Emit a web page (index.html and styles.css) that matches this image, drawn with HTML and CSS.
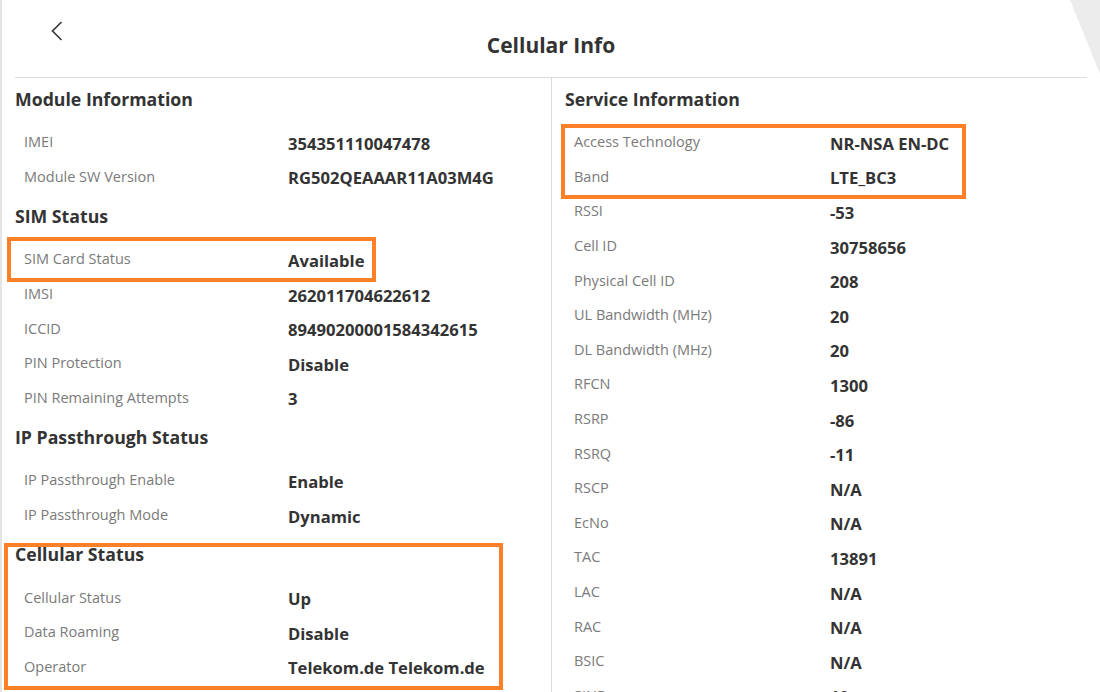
FILE: index.html
```html
<!DOCTYPE html>
<html lang="en">
<head>
<meta charset="utf-8">
<title>Cellular Info</title>
<link rel="stylesheet" href="styles.css">
</head>
<body>
<div class="page">
  <div class="corner"></div>
  <header class="header">
    <div class="back">
      <svg width="12" height="20" viewBox="0 0 12 20"><polyline points="10.5,1 1.5,10 10.5,19" fill="none" stroke="#333" stroke-width="1.6"/></svg>
    </div>
    <h1 class="title">Cellular Info</h1>
    <div></div>
  </header>

  <main class="content">
    <section class="col col-left">
      <h2 class="sec">Module Information</h2>
      <div class="row"><span class="lbl">IMEI</span><span class="val">354351110047478</span></div>
      <div class="row"><span class="lbl">Module SW Version</span><span class="val">RG502QEAAAR11A03M4G</span></div>

      <h2 class="sec">SIM Status</h2>
      <div class="row"><span class="lbl">SIM Card Status</span><span class="val">Available</span></div>
      <div class="row"><span class="lbl">IMSI</span><span class="val">262011704622612</span></div>
      <div class="row"><span class="lbl">ICCID</span><span class="val">89490200001584342615</span></div>
      <div class="row"><span class="lbl">PIN Protection</span><span class="val">Disable</span></div>
      <div class="row"><span class="lbl">PIN Remaining Attempts</span><span class="val">3</span></div>

      <h2 class="sec">IP Passthrough Status</h2>
      <div class="row"><span class="lbl">IP Passthrough Enable</span><span class="val">Enable</span></div>
      <div class="row"><span class="lbl">IP Passthrough Mode</span><span class="val">Dynamic</span></div>

      <h2 class="sec">Cellular Status</h2>
      <div class="row"><span class="lbl">Cellular Status</span><span class="val">Up</span></div>
      <div class="row"><span class="lbl">Data Roaming</span><span class="val">Disable</span></div>
      <div class="row"><span class="lbl">Operator</span><span class="val">Telekom.de Telekom.de</span></div>

      <div class="mark mark-sim"></div>
      <div class="mark mark-cell"></div>
    </section>

    <section class="col col-right">
      <h2 class="sec">Service Information</h2>
      <div class="row"><span class="lbl">Access Technology</span><span class="val">NR-NSA EN-DC</span></div>
      <div class="row"><span class="lbl">Band</span><span class="val">LTE_BC3</span></div>
      <div class="row"><span class="lbl">RSSI</span><span class="val">-53</span></div>
      <div class="row"><span class="lbl">Cell ID</span><span class="val">30758656</span></div>
      <div class="row"><span class="lbl">Physical Cell ID</span><span class="val">208</span></div>
      <div class="row"><span class="lbl">UL Bandwidth (MHz)</span><span class="val">20</span></div>
      <div class="row"><span class="lbl">DL Bandwidth (MHz)</span><span class="val">20</span></div>
      <div class="row"><span class="lbl">RFCN</span><span class="val">1300</span></div>
      <div class="row"><span class="lbl">RSRP</span><span class="val">-86</span></div>
      <div class="row"><span class="lbl">RSRQ</span><span class="val">-11</span></div>
      <div class="row"><span class="lbl">RSCP</span><span class="val">N/A</span></div>
      <div class="row"><span class="lbl">EcNo</span><span class="val">N/A</span></div>
      <div class="row"><span class="lbl">TAC</span><span class="val">13891</span></div>
      <div class="row"><span class="lbl">LAC</span><span class="val">N/A</span></div>
      <div class="row"><span class="lbl">RAC</span><span class="val">N/A</span></div>
      <div class="row"><span class="lbl">BSIC</span><span class="val">N/A</span></div>
      <div class="row"><span class="lbl">SINR</span><span class="val">10</span></div>

      <div class="mark mark-svc"></div>
    </section>
  </main>
</div>
</body>
</html>
```

FILE: styles.css
```css
* { box-sizing: border-box; }
html, body { margin: 0; padding: 0; background: #fff; }
body { font-family: "Open Sans", "Liberation Sans", sans-serif; color: #333; }

.page {
  position: relative;
  width: 1100px;
  height: 692px;
  overflow: hidden;
  border-left: 2px solid #e4e4e4;
  background: #fff;
}

.corner {
  position: absolute;
  top: 0;
  right: 0;
  width: 30px;
  height: 74px;
  background: #ececec;
  clip-path: polygon(0 0, 100% 0, 100% 100%);
}

.header {
  display: grid;
  grid-template-columns: 1fr auto 1fr;
  height: 77px;
  align-items: start;
}
.back { padding: 21px 0 0 49px; line-height: 0; }
.title {
  margin: 0;
  padding-top: 30px;
  font-size: 21px;
  line-height: 30px;
  font-weight: 700;
  color: #333;
}

.content {
  display: grid;
  grid-template-columns: 536px 1fr;
  margin: 0 13px;
  border-top: 1px solid #dcdcdc;
  height: 615px;
}
.col { position: relative; }
.col-right { border-left: 1px solid #dcdcdc; padding-left: 13px; }

.sec {
  margin: 0;
  height: 48px;
  padding-top: 9px;
  font-size: 17.7px;
  line-height: 24px;
  font-weight: 700;
  color: #333;
}

.row {
  display: flex;
  align-items: center;
  height: 34.6px;
  padding-left: 9px;
}
.lbl {
  width: 264px;
  flex: none;
  font-size: 14.5px;
  color: #7a7a7a;
  margin-bottom: 3px;
}
.col-right .lbl { width: 256px; }
.val {
  font-size: 16.6px;
  font-weight: 700;
  color: #333;
}

.mark {
  position: absolute;
  border: 4px solid #fd7f28;
  pointer-events: none;
}
.mark-sim { left: -8px; top: 159px; width: 369px; height: 45px; }
.mark-cell { left: -11px; top: 465px; width: 499px; height: 147px; }
.mark-svc { left: 9px; top: 46px; width: 405px; height: 75px; }
```
